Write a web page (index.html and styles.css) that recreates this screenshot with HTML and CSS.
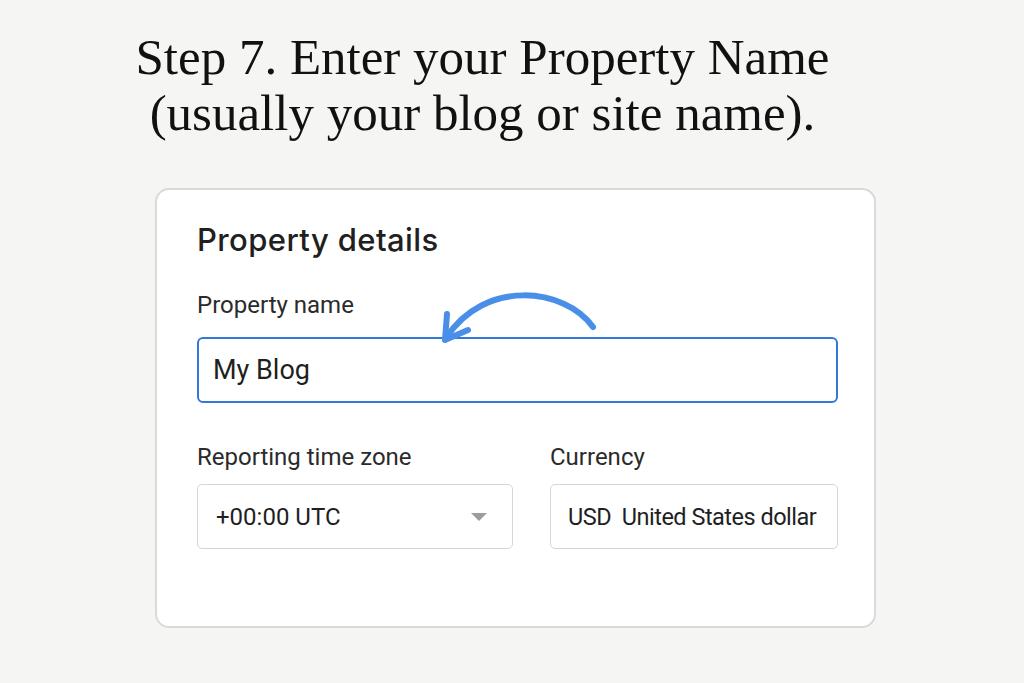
FILE: index.html
```html
<!DOCTYPE html>
<html>
<head>
<meta charset="utf-8">
<link rel="stylesheet" href="styles.css">
</head>
<body>
<main class="page">
  <h1 class="title">Step 7. Enter your Property Name<br>(usually your blog or site name).</h1>
  <section class="card">
    <h2 class="card-title">Property details</h2>
    <div class="field">
      <label class="label">Property name</label>
      <div class="input active">My Blog</div>
    </div>
    <div class="row">
      <div class="field col-left">
        <label class="label">Reporting time zone</label>
        <div class="input select"><span>+00:00 UTC</span><span class="caret"></span></div>
      </div>
      <div class="field col-right">
        <label class="label">Currency</label>
        <div class="input select currency"><span>USD&nbsp; United States dollar</span></div>
      </div>
    </div>
    <svg class="arrow" width="180" height="70" viewBox="0 0 180 70">
      <path d="M163 47 C 135 8, 55 -2, 16 58" fill="none" stroke="#4a8fe7" stroke-width="6" stroke-linecap="round"/>
      <path d="M17 34 L 15 60 L 38 50" fill="none" stroke="#4a8fe7" stroke-width="6" stroke-linecap="round" stroke-linejoin="round"/>
    </svg>
  </section>
</main>
</body>
</html>
```

FILE: styles.css
```css
* { box-sizing: border-box; }
html, body { margin: 0; padding: 0; }
body {
  background: #f5f5f3;
  width: 1024px;
  height: 683px;
  overflow: hidden;
}
.page {
  display: flex;
  flex-direction: column;
}
.title {
  margin: 29px 0 0 0;
  padding-right: 59px;
  text-align: center;
  font-family: "Liberation Serif", serif;
  font-weight: normal;
  font-size: 51px;
  line-height: 56px;
  color: #111;
}
.card {
  position: relative;
  margin: 47px 0 0 155px;
  width: 721px;
  height: 440px;
  background: #fff;
  border: 2px solid #dadada;
  border-radius: 14px;
  padding: 32px 36px 0 40px;
  font-family: Roboto, "Liberation Sans", sans-serif;
  color: #222;
}
.card-title {
  margin: 0;
  font-family: Inter, Roboto, sans-serif;
  font-size: 31px;
  font-weight: 500;
  line-height: 36px;
  letter-spacing: 0.4px;
  color: #202020;
}
.field {
  display: flex;
  flex-direction: column;
}
.card-title + .field { margin-top: 33px; }
.label {
  font-size: 24px;
  line-height: 28px;
  color: #2b2b2b;
  margin-bottom: 18px;
  white-space: nowrap;
}
.input {
  height: 65px;
  border: 1px solid #d6d6d6;
  border-radius: 5px;
  display: flex;
  align-items: center;
  padding: 0 14px;
  font-size: 27px;
  color: #1f1f1f;
  white-space: nowrap;
  overflow: hidden;
}
.input.active {
  height: 66px;
  border: 2px solid #3577d9;
  border-radius: 6px;
  padding: 0 14px;
}
.row {
  display: flex;
  gap: 37px;
  margin-top: 40px;
}
.row .label { margin-bottom: 13px; }
.col-left { width: 316px; }
.col-right { width: 288px; }
.select {
  font-size: 24px;
  padding: 0 25px 0 18px;
  justify-content: space-between;
}
.currency {
  padding: 0 0 0 17px;
  font-size: 23.5px;
  letter-spacing: -0.5px;
}
.caret {
  width: 0;
  height: 0;
  border-left: 8.5px solid transparent;
  border-right: 8.5px solid transparent;
  border-top: 8px solid #9c9c9c;
}
.arrow {
  position: absolute;
  left: 273px;
  top: 90px;
}
```
